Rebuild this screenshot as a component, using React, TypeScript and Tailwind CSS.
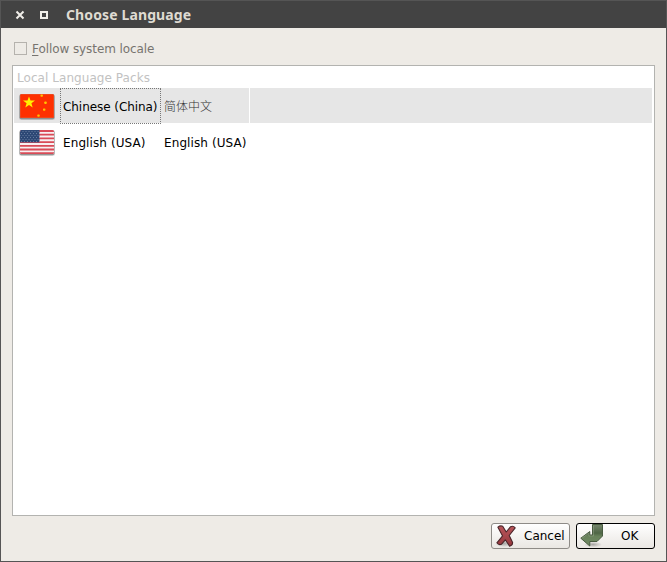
import React from "react";

function ChinaFlag() {
  const star = "M0-6L1.5-2L6-1.9L2.4.8L3.7 5L0 2.5L-3.7 5L-2.4.8L-6-1.9L-1.5-2Z";
  return (
    <svg width="38" height="28" viewBox="0 0 38 28" className="block">
      <rect x="1" y="2.7" width="36" height="25.3" rx="2.5" fill="#000" opacity=".14" />
      <rect x="1.5" y="2" width="35" height="25.2" rx="2" fill="#777" opacity=".7" />
      <rect x="2" y="2" width="34" height="24" rx="1.5" fill="#fe3000" />
      <rect x="2.5" y="2.5" width="33" height="23" rx="1.2" fill="none" stroke="#e65a32" opacity=".5" />
      <path d={star} transform="translate(11 10.4)" fill="#fff200" />
      <g fill="#ffc400">
        <rect x="22.5" y="2.6" width="2.4" height="2.2" rx=".7" />
        <rect x="26.3" y="9.6" width="2.4" height="2.4" rx=".7" />
        <rect x="25" y="16.4" width="2.4" height="2.4" rx=".7" />
        <rect x="19.3" y="22.4" width="2.4" height="2.4" rx=".7" />
      </g>
    </svg>
  );
}

function UsaFlag() {
  return (
    <svg width="38" height="28" viewBox="0 0 38 28" className="block">
      <defs>
        <clipPath id="usa"><rect x="2" y="2" width="34" height="24" rx="1.5" /></clipPath>
        <pattern id="stars" width="3" height="4" patternUnits="userSpaceOnUse">
          <rect width="3" height="4" fill="#2d4875" />
          <path d="M0 1h1v1H0zM1.5 3h1v1h-1z" fill="#667c9f" />
        </pattern>
      </defs>
      <rect x="1" y="2.7" width="36" height="25.3" rx="2.5" fill="#000" opacity=".14" />
      <rect x="1.5" y="2" width="35" height="25.2" rx="2" fill="#777" opacity=".7" />
      <g clipPath="url(#usa)">
        <rect x="2" y="2" width="34" height="24" fill="#f7f0f1" />
        <path d="M2 3h34M2 6.7h34M2 10.4h34M2 14.1h34M2 17.8h34M2 21.5h34M2 25.2h34" stroke="#d94b57" strokeWidth="1.8" />
        <rect x="2" y="2" width="19.5" height="12.4" fill="url(#stars)" />
      </g>
    </svg>
  );
}

function CancelIcon() {
  return (
    <svg width="24" height="24" viewBox="0 0 24 24" className="block">
      <defs>
        <linearGradient id="red" x2="0" y2="1"><stop stopColor="#b9575b" /><stop offset="1" stopColor="#97373d" /></linearGradient>
        <radialGradient id="shade"><stop stopColor="#000" stopOpacity=".3" /><stop offset="1" stopColor="#000" stopOpacity="0" /></radialGradient>
      </defs>
      <ellipse cx="9" cy="19.5" rx="9" ry="3.5" fill="url(#shade)" />
      <path d="M2.9 3.2Q5 1.3 7.7 2.2L11.2 8L15.6 2.7Q18.3 1.5 20.2 3.8L14.2 11.5L17.6 18.6Q17.7 21.4 14.6 22.2L10.3 15.8L6.4 20.3Q3.6 21.3 1.9 18.8L7.6 11.9Z" fill="url(#red)" stroke="#4a2529" strokeWidth="1.1" strokeLinejoin="round" />
    </svg>
  );
}

function OkIcon() {
  return (
    <svg width="24" height="24" viewBox="0 0 24 24" className="block">
      <defs>
        <linearGradient id="green" x2="0" y2="1"><stop stopColor="#76866d" /><stop offset=".4" stopColor="#4f6646" /><stop offset=".55" stopColor="#68825b" /><stop offset="1" stopColor="#718b64" /></linearGradient>
      </defs>
      <ellipse cx="13" cy="20.5" rx="9" ry="2.8" fill="url(#shade)" />
      <path d="M12.5 .5H22.5V12L17 17.5H9.8V22L.8 14.2L9.8 7.5V11H12.5Z" fill="url(#green)" stroke="#485b40" strokeLinejoin="round" />
      <path d="M1.9 14.2L8.8 9.2V12H13.5V1.5" fill="none" stroke="#a2b297" strokeWidth=".8" opacity=".5" />
    </svg>
  );
}

export default function App() {
  return (
    <div className="flex h-[562px] w-[667px] flex-col border border-t-0 border-[#555] bg-[#eeebe6] font-['DejaVu_Sans','Noto_Sans_CJK_SC',sans-serif] text-[12px] leading-4 text-black">
      <header className="flex h-7 shrink-0 items-center border-t border-[#555] bg-[#434343] pb-px pl-[14px]">
        <svg width="10" height="10" viewBox="0 0 10 10" className="mt-px" fill="none" stroke="#f0eee9" strokeWidth="2">
          <path d="M1.5 1.5L8.5 8.5M8.5 1.5L1.5 8.5" />
        </svg>
        <span className="ml-[15px] mt-px size-2 border-2 border-[#f0eee9]" />
        <h1 className="ml-[18px] mt-[2px] whitespace-nowrap font-['Noto_Sans',sans-serif] text-[14px] font-bold leading-5 tracking-[0.12px] text-[#dfdbd2]">Choose Language</h1>
      </header>
      <main className="flex min-h-0 flex-1 flex-col px-[11px] pb-[11px]">
        <label className="flex h-[37px] items-center gap-[5px] pl-[2px] pt-1 text-[#77746f]">
          <span className="size-[13px] border border-[#b5b2ad]" />
          <span className="tracking-[-0.08px]"><u className="underline-offset-2">F</u>ollow system locale</span>
        </label>
        <section className="h-[451px] w-[643px] shrink-0 border border-[#b3b3b0] bg-white p-px pr-[2px]">
          <div className="h-[21px] pl-[3px] pt-[3px] tracking-[0.06px] text-[#c2c2c2]">Local Language Packs</div>
          <div className="mb-px flex h-[35px] bg-[#e6e6e6]">
            <div className="w-[46px] pl-1 pt-1"><ChinaFlag /></div>
            <div className="flex h-9 w-[101px] items-center whitespace-nowrap border border-dotted border-[#777] pl-[2px] pt-px tracking-[-0.06px]">Chinese (China)</div>
            <div className="flex w-[89px] items-center border-r border-white pl-[3px] pt-px font-['Noto_Sans_CJK_SC',sans-serif] font-light text-[#333]">简体中文</div>
          </div>
          <div className="flex h-9">
            <div className="w-[46px] pl-1 pt-1"><UsaFlag /></div>
            <div className="flex w-[101px] items-center whitespace-nowrap pl-[3px] pt-px tracking-[0.1px]">English (USA)</div>
            <div className="flex items-center whitespace-nowrap pl-[3px] pt-px tracking-[0.1px]">English (USA)</div>
          </div>
        </section>
        <div className="mt-[7px] flex justify-end gap-[6px]">
          <button className="flex h-[26px] w-[79px] items-center rounded-[3px] border border-[#8e8b87] bg-linear-to-b from-white to-[#eae7e3] pl-[3px]">
            <CancelIcon /><span className="ml-[5px]">Cancel</span>
          </button>
          <button className="flex h-[26px] w-[79px] items-center rounded-[3px] border border-black bg-linear-to-b from-white to-[#eae7e3] pl-[3px]">
            <OkIcon /><span className="ml-[17px]">OK</span>
          </button>
        </div>
      </main>
    </div>
  );
}
